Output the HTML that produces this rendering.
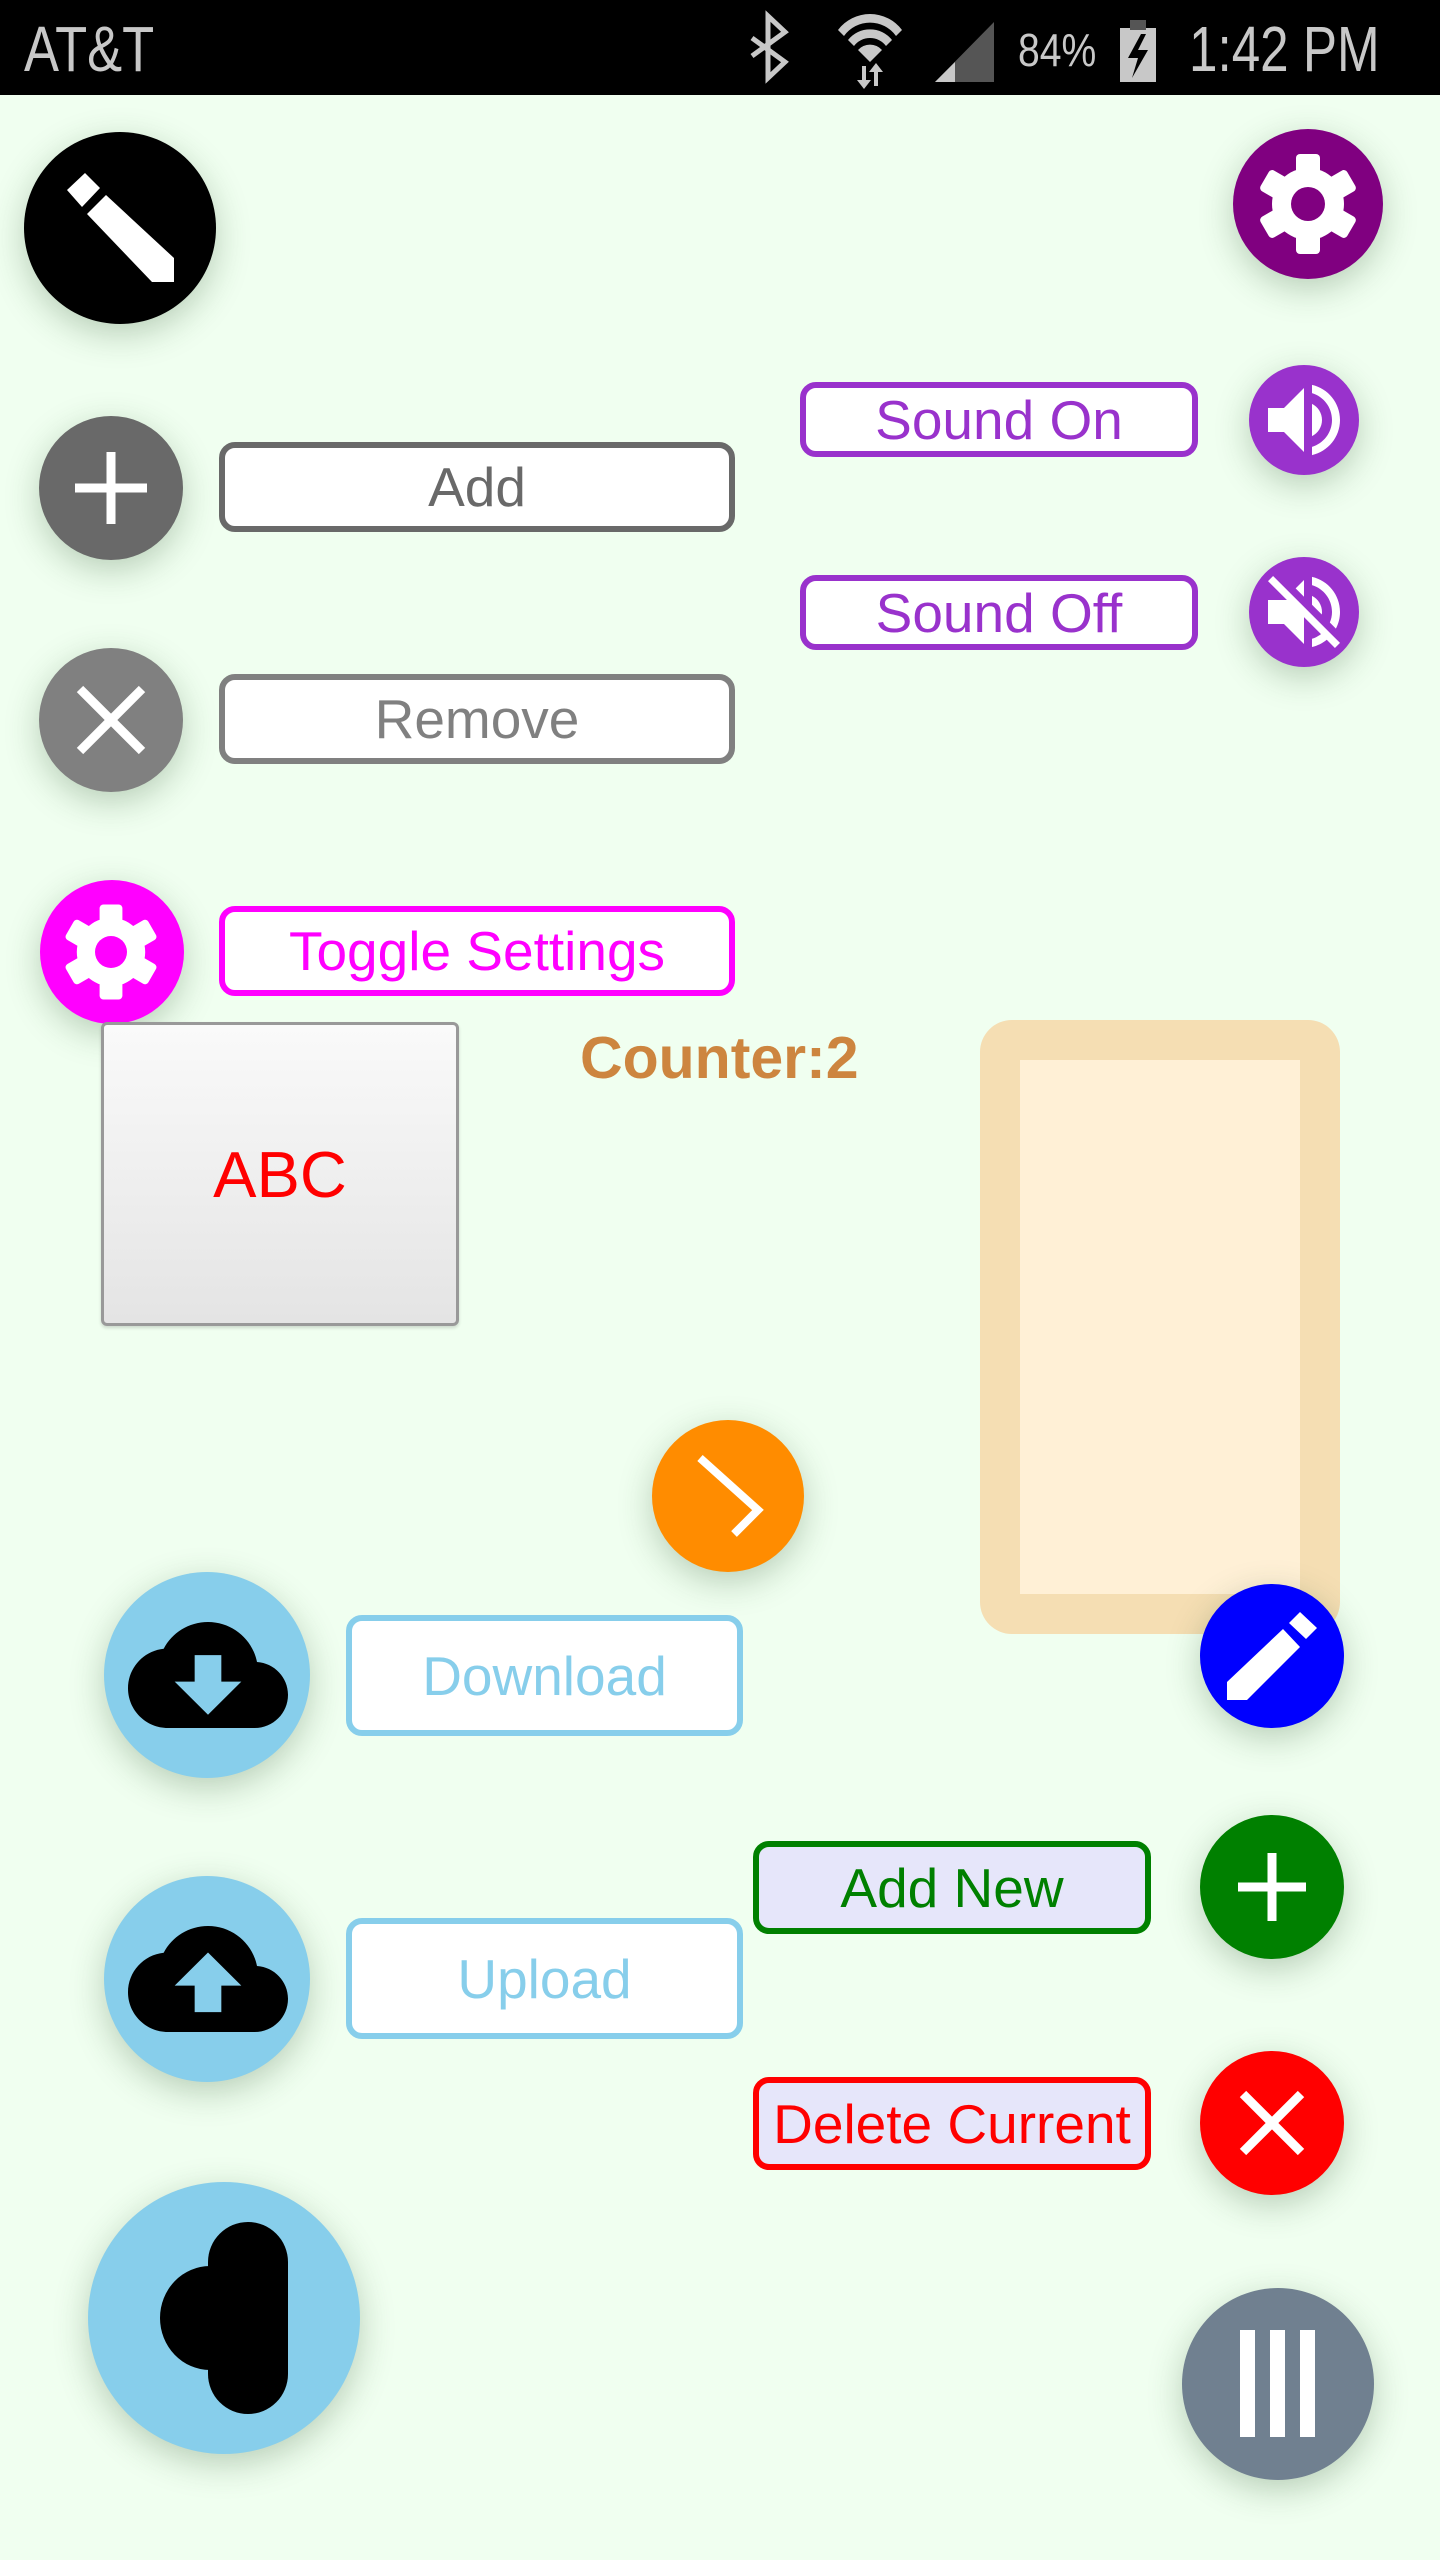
<!DOCTYPE html>
<html><head><meta charset="utf-8"><style>
html,body{margin:0;padding:0}
body{width:1440px;height:2560px;background:#F0FFF0;position:relative;overflow:hidden;font-family:"Liberation Sans",sans-serif}
.sb{position:absolute;left:0;top:0;width:1440px;height:95px;background:#000}
.c{position:absolute;border-radius:50%;box-shadow:0 10px 34px rgba(40,80,40,0.28)}
.b{position:absolute;box-sizing:border-box;border-radius:16px;background:#fff;display:flex;align-items:center;justify-content:center;font-size:55px;white-space:nowrap}
</style></head><body>
<div class="sb"></div>
<div style="position:absolute;left:24px;top:14px;font-size:64px;color:#c8c8c8;transform:scaleX(0.82);transform-origin:left top;line-height:70px">AT&amp;T</div>
<div style="position:absolute;left:1018px;top:22px;font-size:46px;color:#c8c8c8;transform:scaleX(0.85);transform-origin:left top;line-height:56px">84%</div>
<div style="position:absolute;left:1189px;top:14px;font-size:64px;color:#c8c8c8;transform:scaleX(0.8);transform-origin:left top;line-height:70px;white-space:nowrap">1:42 PM</div>

<!-- circles -->
<div class="c" style="left:24px;top:132px;width:192px;height:192px;background:#000"></div>
<div class="c" style="left:1233px;top:129px;width:150px;height:150px;background:#800080"></div>
<div class="c" style="left:39px;top:416px;width:144px;height:144px;background:#696969"></div>
<div class="c" style="left:1249px;top:365px;width:110px;height:110px;background:#9932CC"></div>
<div class="c" style="left:1249px;top:557px;width:110px;height:110px;background:#9932CC"></div>
<div class="c" style="left:39px;top:648px;width:144px;height:144px;background:#808080"></div>
<div class="c" style="left:40px;top:880px;width:144px;height:144px;background:#FF00FF"></div>
<div class="c" style="left:652px;top:1420px;width:152px;height:152px;background:#FF8C00"></div>
<div class="c" style="left:104px;top:1572px;width:206px;height:206px;background:#87CEEB"></div>
<div class="c" style="left:104px;top:1876px;width:206px;height:206px;background:#87CEEB"></div>
<div class="c" style="left:88px;top:2182px;width:272px;height:272px;background:#87CEEB"></div>
<div class="c" style="left:1182px;top:2288px;width:192px;height:192px;background:#708090"></div>

<!-- buttons -->
<div class="b" style="left:219px;top:442px;width:516px;height:90px;border:6px solid #696969;color:#696969">Add</div>
<div class="b" style="left:219px;top:674px;width:516px;height:90px;border:6px solid #808080;color:#808080">Remove</div>
<div class="b" style="left:219px;top:906px;width:516px;height:90px;border:6px solid #FF00FF;color:#FF00FF">Toggle Settings</div>
<div class="b" style="left:800px;top:382px;width:398px;height:75px;border:6px solid #9932CC;color:#9932CC">Sound On</div>
<div class="b" style="left:800px;top:575px;width:398px;height:75px;border:6px solid #9932CC;color:#9932CC">Sound Off</div>
<div class="b" style="left:346px;top:1615px;width:397px;height:121px;border:6px solid #87CEEB;color:#87CEEB">Download</div>
<div class="b" style="left:346px;top:1918px;width:397px;height:121px;border:6px solid #87CEEB;color:#87CEEB">Upload</div>
<div class="b" style="left:753px;top:1841px;width:398px;height:93px;border:6px solid #008000;color:#008000;background:#E6E6FA">Add New</div>
<div class="b" style="left:753px;top:2077px;width:398px;height:93px;border:6px solid #FF0000;color:#FF0000;background:#E6E6FA">Delete Current</div>

<!-- ABC box -->
<div style="position:absolute;left:101px;top:1022px;width:358px;height:304px;box-sizing:border-box;border:3px solid #999;border-radius:6px;background:linear-gradient(#fafafa,#e4e4e4);display:flex;align-items:center;justify-content:center;color:#f00;font-size:65px;box-shadow:0 2px 3px rgba(0,0,0,0.15)">ABC</div>
<div style="position:absolute;left:580px;top:1024px;font-size:59px;font-weight:bold;color:#CD853F;line-height:68px">Counter:2</div>
<div style="position:absolute;left:980px;top:1020px;width:360px;height:614px;box-sizing:border-box;border:40px solid #F5DEB3;border-radius:32px;background:#FFF0D6"></div>
<div class="c" style="left:1200px;top:1584px;width:144px;height:144px;background:#0000FF"></div>
<div class="c" style="left:1200px;top:1815px;width:144px;height:144px;background:#008000"></div>
<div class="c" style="left:1200px;top:2051px;width:144px;height:144px;background:#FF0000"></div>

<svg style="position:absolute;left:0;top:0" width="1440" height="2560" viewBox="0 0 1440 2560">
<defs>
<g id="gear">
<circle r="36" fill="#fff"/>
<g fill="#fff">
<rect x="-12" y="-50" width="24" height="100" rx="4"/>
<rect x="-12" y="-50" width="24" height="100" rx="4" transform="rotate(60)"/>
<rect x="-12" y="-50" width="24" height="100" rx="4" transform="rotate(120)"/>
</g>
</g>
</defs>
<!-- status icons -->
<g fill="none" stroke="#c8c8c8" stroke-width="5">
<path d="M752 38 L785 62 L768 78 L768 16 L785 32 L752 56"/>
</g>
<g fill="#c8c8c8">
<path d="M838 30 a40 40 0 0 1 64 0 l-6 6 a32 32 0 0 0 -52 0z"/>
<path d="M848 40 a28 28 0 0 1 44 0 l-6 6 a20 20 0 0 0 -32 0z"/>
<path d="M858 50 a16 16 0 0 1 24 0 l-12 12z"/>
<path d="M862 66h4v14h5l-7 9-7-9h5z M874 86h4v-14h5l-7-9-7 9h5z"/>
<path d="M935 82 L994 22 L994 82z" fill="#555"/>
<path d="M935 82 L955 62 L955 82z"/>
<rect x="1120" y="28" width="36" height="54" fill="#c8c8c8"/>
<rect x="1130" y="20" width="16" height="10" fill="#555"/>
<path d="M1141 34 L1128 58 L1138 58 L1132 78 L1148 50 L1138 50 L1146 34z" fill="#000"/>
</g>
<!-- black pencil -->
<polygon points="67,190 85,173 100,188 82,207" fill="#fff"/>
<polygon points="87,214 106,195 174,258 174,282 152,282" fill="#fff"/>
<!-- gears -->
<use href="#gear" transform="translate(1308,204)"/>
<circle cx="1308" cy="204" r="17" fill="#800080"/>
<use href="#gear" transform="translate(111,952) scale(0.95)"/>
<circle cx="111" cy="952" r="16" fill="#FF00FF"/>
<!-- speakers -->
<svg x="1256" y="372" width="96" height="96" viewBox="0 0 24 24"><path fill="#fff" d="M3 9v6h4l5 5V4L7 9H3zm13.5 3c0-1.77-1.02-3.29-2.5-4.03v8.05c1.48-.73 2.5-2.25 2.5-4.02zM14 3.23v2.06c2.89.86 5 3.54 5 6.71s-2.11 5.85-5 6.71v2.06c4.01-.91 7-4.49 7-8.77s-2.99-7.86-7-8.77z"/></svg>
<svg x="1256" y="564" width="96" height="96" viewBox="0 0 24 24"><path fill="#fff" d="M16.5 12c0-1.77-1.02-3.29-2.5-4.03v2.21l2.45 2.45c.03-.2.05-.41.05-.63zm2.5 0c0 .94-.2 1.82-.54 2.64l1.51 1.51C20.63 14.91 21 13.5 21 12c0-4.280-2.99-7.86-7-8.77v2.06c2.89.86 5 3.54 5 6.71zM4.27 3L3 4.27 7.73 9H3v6h4l5 5v-6.73l4.25 4.25c-.67.52-1.42.93-2.25 1.18v2.06c1.38-.31 2.630-.95 3.69-1.81L19.73 21 21 19.73l-9-9L4.27 3zM12 4L9.91 6.09 12 8.18V4z"/></svg>
<!-- plus / x -->
<g stroke="#fff" stroke-width="9">
<path d="M75 488h72M111 452v72"/>
<path d="M80 689l62 62M142 689l-62 62"/>
<path d="M1238 1887h68M1272 1853v68"/>
<path d="M1243 2094l58 58M1301 2094l-58 58"/>
</g>
<!-- chevron -->
<polyline points="700,1458 758,1510 734,1534" fill="none" stroke="#fff" stroke-width="8"/>
<!-- blue pencil -->
<polygon points="1289,1623 1300,1612 1317,1628 1306,1639" fill="#fff"/>
<polygon points="1227,1682 1283,1629 1300,1647 1247,1700 1227,1700" fill="#fff"/>
<!-- clouds -->
<svg x="128" y="1622" width="160" height="106" viewBox="0 4 24 16" preserveAspectRatio="none"><path d="M19.35 10.04C18.67 6.59 15.64 4 12 4 9.11 4 6.6 5.64 5.35 8.04 2.34 8.36 0 10.91 0 14c0 3.31 2.69 6 6 6h13c2.76 0 5-2.24 5-5 0-2.64-2.05-4.78-4.65-4.96z"/><path fill="#87CEEB" d="M17 13l-5 5-5-5h3V9h4v4h3z"/></svg>
<svg x="128" y="1926" width="160" height="106" viewBox="0 4 24 16" preserveAspectRatio="none"><path d="M19.35 10.04C18.67 6.59 15.64 4 12 4 9.11 4 6.6 5.64 5.35 8.04 2.34 8.36 0 10.91 0 14c0 3.31 2.69 6 6 6h13c2.76 0 5-2.24 5-5 0-2.64-2.05-4.780-4.65-4.96z"/><path fill="#87CEEB" d="M14 13v4h-4v-4H7l5-5 5 5h-3z"/></svg>
<!-- blob -->
<rect x="208" y="2222" width="80" height="192" rx="40" fill="#000"/>
<ellipse cx="210" cy="2318" rx="50" ry="52" fill="#000"/>
<!-- bars -->
<g fill="#fff"><rect x="1240" y="2330" width="15" height="107"/><rect x="1270" y="2330" width="15" height="107"/><rect x="1300" y="2330" width="15" height="107"/></g>
</svg>
</body></html>
